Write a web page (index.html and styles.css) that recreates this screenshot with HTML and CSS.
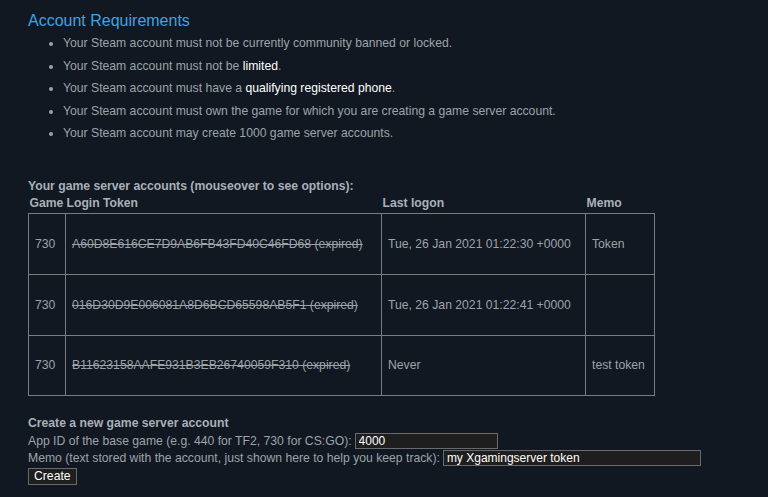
FILE: index.html
```html
<!DOCTYPE html>
<html>
<head>
<meta charset="utf-8">
<link rel="stylesheet" href="styles.css">
</head>
<body>
<div class="page">
  <h2 class="title">Account Requirements</h2>
  <ul class="reqs">
    <li>Your Steam account must not be currently community banned or locked.</li>
    <li>Your Steam account must not be <a class="hl">limited</a>.</li>
    <li>Your Steam account must have a <a class="hl">qualifying registered phone</a>.</li>
    <li>Your Steam account must own the game for which you are creating a game server account.</li>
    <li>Your Steam account may create 1000 game server accounts.</li>
  </ul>

  <div class="section-title list-title">Your game server accounts (mouseover to see options):</div>
  <table class="accounts">
    <colgroup>
      <col class="c-game">
      <col class="c-token">
      <col class="c-logon">
      <col class="c-memo">
    </colgroup>
    <thead>
      <tr>
        <th>Game</th>
        <th>Login Token</th>
        <th>Last logon</th>
        <th>Memo</th>
      </tr>
    </thead>
    <tbody>
      <tr>
        <td>730</td>
        <td><span class="expired">A60D8E616CE7D9AB6FB43FD40C46FD68 (expired)</span></td>
        <td>Tue, 26 Jan 2021 01:22:30 +0000</td>
        <td>Token</td>
      </tr>
      <tr>
        <td>730</td>
        <td><span class="expired">016D30D9E006081A8D6BCD65598AB5F1 (expired)</span></td>
        <td>Tue, 26 Jan 2021 01:22:41 +0000</td>
        <td></td>
      </tr>
      <tr>
        <td>730</td>
        <td><span class="expired">B11623158AAFE931B3EB26740059F310 (expired)</span></td>
        <td>Never</td>
        <td>test token</td>
      </tr>
    </tbody>
  </table>

  <form class="create">
    <div class="section-title form-title">Create a new game server account</div>
    <div class="row"><span>App ID of the base game (e.g. 440 for TF2, 730 for CS:GO):</span><input class="field appid" type="text" value="4000"></div>
    <div class="row"><span>Memo (text stored with the account, just shown here to help you keep track):</span><input class="field memo" type="text" value="my Xgamingserver token"></div>
    <button class="btn" type="button">Create</button>
  </form>
</div>
</body>
</html>
```

FILE: styles.css
```css
html, body {
  margin: 0;
  padding: 0;
  background: #111822;
}
body {
  font-family: "Liberation Sans", Arial, sans-serif;
  color: #9ea3a8;
  font-size: 12.2px;
}
.page {
  padding: 10px 0 0 28px;
}
.title {
  margin: 0;
  font-size: 16px;
  line-height: 22px;
  font-weight: normal;
  color: #3ca4e6;
}
.reqs {
  margin: 0;
  padding: 0 0 0 35px;
  list-style: disc;
}
.reqs li {
  line-height: 22.5px;
}
.hl {
  color: #ffffff;
  text-decoration: none;
}
.section-title {
  font-weight: bold;
  color: #a9b0b8;
  font-size: 12.2px;
  line-height: 18px;
}
.list-title {
  margin-top: 32px;
}
.accounts {
  border-collapse: collapse;
  table-layout: fixed;
  width: 626px;
  margin: 0;
}
.c-game { width: 37px; }
.c-token { width: 316px; }
.c-logon { width: 204px; }
.c-memo { width: 69px; }
.accounts th {
  text-align: left;
  font-weight: bold;
  color: #a9b0b8;
  font-size: 12.2px;
  padding: 0 1px 2px 1px;
  line-height: 16px;
}
.accounts td {
  border: 1px solid #7a7d80;
  padding: 0 6px;
  height: 60px;
  color: #9ea3a8;
  white-space: nowrap;
  overflow: hidden;
}
.accounts tbody tr:last-child td {
  height: 59px;
}
.expired {
  text-decoration: line-through;
}
.create {
  margin: 17px 0 0 0;
}
.form-title {
  line-height: 20px;
}
.create .row {
  display: flex;
  align-items: center;
  gap: 3px;
  height: 17px;
}
.field {
  font-family: "Liberation Sans", Arial, sans-serif;
  font-size: 12px;
  color: #ffffff;
  background: #1e1e1e;
  border: 1px solid #6a6a6a;
  padding: 0 3px;
  height: 16px;
  box-sizing: border-box;
  margin: 0;
}
.appid { width: 143px; }
.memo { width: 258px; }
.btn {
  display: block;
  font-family: "Liberation Sans", Arial, sans-serif;
  font-size: 12.2px;
  color: #ffffff;
  background: #1e1e1e;
  border: 1px solid #6a6a6a;
  padding: 0 5px;
  height: 17px;
  line-height: 14px;
  margin-top: 1px;
}
```
